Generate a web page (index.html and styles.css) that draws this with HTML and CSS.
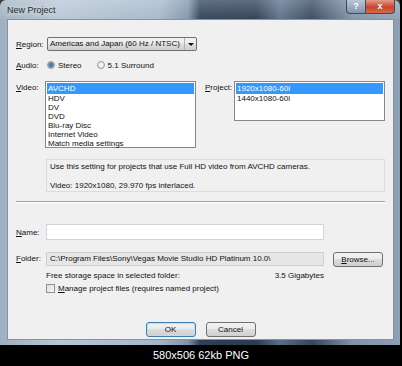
FILE: index.html
```html
<!DOCTYPE html>
<html lang="en">
<head>
    <meta charset="UTF-8">
    <title>New Project</title>
    <link rel="stylesheet" href="styles.css">
</head>
<body>
    <div class="window">
        <div class="titlebar">
            <span class="title">New Project</span>
            <div class="caption-btns">
                <span class="cap-btn help">?</span>
                <span class="cap-btn close">x</span>
            </div>
        </div>

        <div class="client">
            <div class="row region-row">
                <label class="lbl"><u>R</u>egion:</label>
                <div class="dropdown">
                    <span class="dd-text">Americas and Japan (60 Hz / NTSC)</span>
                    <span class="dd-arrow"></span>
                </div>
            </div>

            <div class="row audio-row">
                <label class="lbl"><u>A</u>udio:</label>
                <span class="radio checked"></span><span class="radio-text">Stereo</span>
                <span class="radio"></span><span class="radio-text">5.1 Surround</span>
            </div>

            <div class="row lists-row">
                <label class="lbl top"><u>V</u>ideo:</label>
                <ul class="listbox video-list">
                    <li class="selected">AVCHD</li>
                    <li>HDV</li>
                    <li>DV</li>
                    <li>DVD</li>
                    <li>Blu-ray Disc</li>
                    <li>Internet Video</li>
                    <li>Match media settings</li>
                </ul>
                <label class="lbl top project-lbl"><u>P</u>roject:</label>
                <ul class="listbox project-list">
                    <li class="selected">1920x1080-60i</li>
                    <li>1440x1080-60i</li>
                </ul>
            </div>

            <div class="description">
                <p>Use this setting for projects that use Full HD video from AVCHD cameras.</p>
                <p>Video: 1920x1080, 29.970 fps interlaced.</p>
            </div>

            <div class="separator"></div>

            <div class="row name-row">
                <label class="lbl"><u>N</u>ame:</label>
                <div class="textbox"></div>
            </div>

            <div class="row folder-row">
                <label class="lbl"><u>F</u>older:</label>
                <div class="folder-box">C:\Program Files\Sony\Vegas Movie Studio HD Platinum 10.0\</div>
                <button class="btn browse"><u>B</u>rowse...</button>
            </div>

            <div class="storage">
                <span>Free storage space in selected folder:</span>
                <span>3.5 Gigabytes</span>
            </div>

            <div class="check-row">
                <span class="checkbox"></span>
                <span><u>M</u>anage project files (requires named project)</span>
            </div>

            <div class="actions">
                <button class="btn default">OK</button>
                <button class="btn">Cancel</button>
            </div>
        </div>
    </div>

    <div class="caption">580x506 62kb PNG</div>
</body>
</html>
```

FILE: styles.css
```css
* {
    margin: 0;
    padding: 0;
    box-sizing: border-box;
}

body {
    width: 402px;
    height: 366px;
    overflow: hidden;
    background: #000;
    font-family: "Liberation Sans", Arial, sans-serif;
    font-size: 8px;
    color: #111;
}

u {
    text-decoration: underline;
}

.window {
    width: 400px;
    height: 345px;
    padding: 0 6px 5px 7px;
    background: linear-gradient(90deg, #9fb0c2 0%, #b7c6d5 15%, #a4b6c9 40%, #7d93ab 47%, #2d4057 50%, #2a3c51 64%, #5a6f88 70%, #33465d 78%, #7f92a8 88%, #8da0b5 100%);
    border-radius: 6px 6px 0 0;
    display: flex;
    flex-direction: column;
}

.titlebar {
    height: 19px;
    display: flex;
    align-items: flex-start;
    justify-content: space-between;
    background: linear-gradient(180deg, rgba(255, 255, 255, 0.25), rgba(255, 255, 255, 0.05));
    margin: 0 -6px 0 -7px;
    padding: 0 5px 0 7px;
}

.title {
    font-size: 9px;
    color: #2a2a2a;
    line-height: 20px;
    text-shadow: 0 0 6px rgba(255, 255, 255, 0.8);
}

.caption-btns {
    display: flex;
    margin-top: 0;
}

.cap-btn {
    height: 14px;
    color: #fff;
    font-size: 9px;
    font-weight: bold;
    text-align: center;
    line-height: 13px;
    border: 1px solid #3c4b5e;
    border-top: none;
}

.help {
    width: 19px;
    background: linear-gradient(180deg, #b9c7d6, #8195ab);
    border-radius: 0 0 0 4px;
    border-right: none;
}

.close {
    width: 30px;
    background: linear-gradient(180deg, #e59a86, #c7452c 55%, #d66a4d);
    border-radius: 0 0 4px 0;
}

.client {
    flex: 1;
    background: #f0f0f0;
    border: 1px solid #8393a5;
    padding: 17px 8px 0 8px;
    display: flex;
    flex-direction: column;
}

.row {
    display: flex;
    align-items: center;
}

.lbl {
    width: 30px;
    flex-shrink: 0;
}

.lbl.top {
    align-self: flex-start;
    padding-top: 2px;
}

.dropdown {
    width: 150px;
    height: 14px;
    margin-left: 1px;
    border: 1px solid #707070;
    border-radius: 2px;
    background: linear-gradient(180deg, #f2f2f2 0%, #ebebeb 45%, #dddddd 50%, #cfcfcf 100%);
    display: flex;
    align-items: center;
}

.dd-text {
    flex: 1;
    padding-left: 2px;
    line-height: 12px;
    border-right: 1px solid #b0b0b0;
}

.dd-arrow {
    width: 11px;
    height: 12px;
    position: relative;
}

.dd-arrow::after {
    content: "";
    position: absolute;
    left: 3px;
    top: 5px;
    border-left: 3px solid transparent;
    border-right: 3px solid transparent;
    border-top: 3px solid #111;
}

.audio-row {
    margin-top: 9px;
    height: 10px;
}

.radio {
    width: 8px;
    height: 8px;
    margin-left: 1px;
    border-radius: 50%;
    border: 1px solid #9a9a9a;
    background: radial-gradient(circle, #ffffff, #d8d8d8);
}

.radio.checked {
    background: radial-gradient(circle, #4c7ea8 0 2px, #9fb8cf 3px, #e8e8e8 4px);
}

.radio-text {
    margin-left: 3px;
    margin-right: 14px;
}

.lists-row {
    margin-top: 11px;
    align-items: flex-start;
}

.listbox {
    list-style: none;
    width: 151px;
    margin-left: -1px;
    background: #fff;
    border: 1px solid #828790;
    padding: 1px;
}

.video-list {
    height: 67px;
}

.project-lbl {
    margin-left: 9px;
}

.project-list {
    height: 40px;
}

.listbox li {
    height: 9px;
    line-height: 9px;
    padding-left: 1px;
    white-space: nowrap;
}

.listbox li.selected {
    background: #3399ff;
    color: #fff;
    height: 11px;
    line-height: 11px;
}

.description {
    margin: 11px 0 0 30px;
    width: 339px;
    height: 33px;
    border: 1px solid #dcdcdc;
    padding: 2px 3px;
}

.description p {
    line-height: 9px;
    margin-bottom: 10px;
}

.separator {
    margin-top: 9px;
    width: 369px;
    height: 2px;
    border-top: 1px solid #a0a0a0;
    border-bottom: 1px solid #ffffff;
}

.name-row {
    margin-top: 21px;
}

.textbox {
    width: 278px;
    height: 16px;
    background: #fff;
    border: 1px solid #d0d3d8;
}

.folder-row {
    margin-top: 10px;
}

.folder-box {
    width: 278px;
    height: 14px;
    background: #e6e6e6;
    border: 1px solid #cfcfcf;
    padding-left: 3px;
    line-height: 12px;
}

.btn {
    width: 50px;
    height: 15px;
    font-family: "Liberation Sans", Arial, sans-serif;
    font-size: 8px;
    color: #111;
    border: 1px solid #707070;
    border-radius: 3px;
    background: linear-gradient(180deg, #f2f2f2 0%, #ebebeb 45%, #dddddd 50%, #cfcfcf 100%);
}

.browse {
    margin-left: 9px;
    margin-top: 2px;
}

.storage {
    margin: 4px 0 0 30px;
    width: 278px;
    display: flex;
    justify-content: space-between;
    line-height: 10px;
}

.check-row {
    margin: 3px 0 0 30px;
    display: flex;
    align-items: center;
    gap: 3px;
}

.checkbox {
    width: 9px;
    height: 9px;
    border: 1px solid #8f8f8f;
    background: linear-gradient(135deg, #dcdcdc, #fafafa);
}

.actions {
    margin-top: 29px;
    display: flex;
    justify-content: center;
    gap: 10px;
}

.btn.default {
    border-color: #3c7fb1;
    box-shadow: inset 0 0 0 1px #b8e0f6;
}

.caption {
    height: 21px;
    line-height: 20px;
    text-align: center;
    color: #fff;
    font-family: "Liberation Sans", Arial, sans-serif;
    font-size: 11px;
}
```
